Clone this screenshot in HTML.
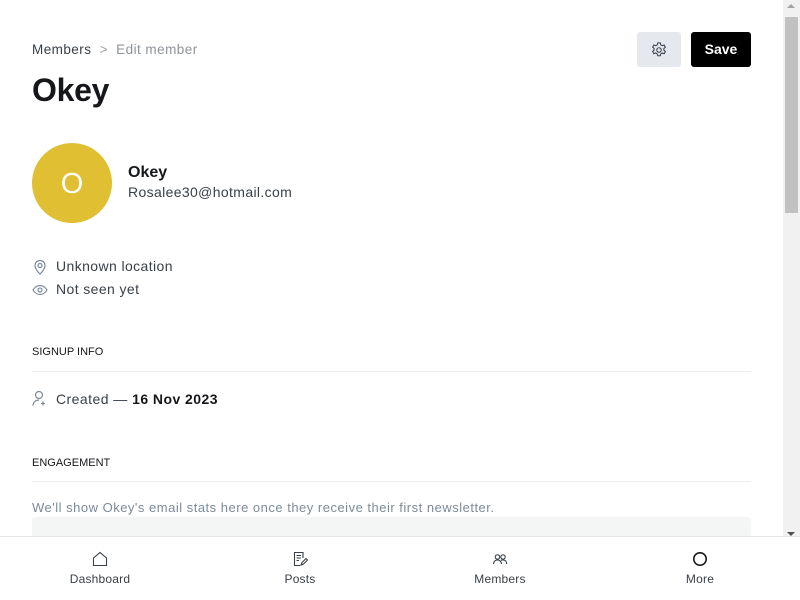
<!DOCTYPE html>
<html><head><meta charset="utf-8"><style>
*{box-sizing:border-box;margin:0;padding:0}
body{width:800px;height:600px;overflow:hidden;background:#fff;font-family:"Liberation Sans",Arial,sans-serif;color:#15171a;position:relative}
.a{position:absolute;white-space:nowrap}
.sb{position:absolute;left:783px;top:0;width:17px;height:536px;background:#f1f1f1}
.thumb{position:absolute;left:785px;top:17px;width:13px;height:196px;background:#c1c1c1}
.hr{position:absolute;left:32px;width:719px;height:1px;background:#ebeef0}
.nav{position:absolute;left:0;top:536px;width:800px;height:64px;background:#fff;border-top:1px solid #e3e5e8}
.ni{position:absolute;top:0;width:200px;text-align:center;font-size:12px;color:#394047;letter-spacing:0.2px}
</style></head><body>
<div class="sb"></div><div class="thumb"></div>
<div class="a" style="left:787px;top:4px;width:0;height:0;border-left:4px solid transparent;border-right:4px solid transparent;border-bottom:4px solid #a3a3a3"></div>
<div class="a" style="left:787px;top:532px;width:0;height:0;border-left:4px solid transparent;border-right:4px solid transparent;border-top:4px solid #505050"></div>

<div class="a" style="left:32px;top:42px;font-size:13.5px;color:#394047;letter-spacing:0.45px">Members <span style="color:#a0a6ad;margin:0 4px">&gt;</span> <span style="color:#8e9499">Edit member</span></div>
<div class="a" style="left:32px;top:72px;font-size:32px;font-weight:bold;letter-spacing:-0.3px">Okey</div>

<div class="a" style="left:637px;top:32px;width:44px;height:35px;background:#e5e9ed;border-radius:3px"></div>
<svg class="a" style="left:650px;top:41px" width="18" height="18" viewBox="0 0 24 24" fill="none" stroke="#394047" stroke-width="1.4"><circle cx="12" cy="12" r="3"/><path d="M10.3 2.5h3.4l.6 2.6 2 1.1 2.5-.9 1.7 2.9-2 1.8v2.2l2 1.8-1.7 2.9-2.5-.9-2 1.2-.6 2.5h-3.4l-.6-2.5-2-1.2-2.5.9-1.7-2.9 2-1.8v-2.2l-2-1.8 1.7-2.9 2.5.9 2-1.1z"/></svg>
<div class="a" style="left:691px;top:32px;width:60px;height:35px;background:#000;border-radius:3px;color:#fff;font-weight:bold;font-size:14px;text-align:center;line-height:35px">Save</div>

<div class="a" style="left:32px;top:143px;width:80px;height:80px;border-radius:50%;background:#e0bf33;color:#fff;font-size:29px;text-align:center;line-height:82px">O</div>
<div class="a" style="left:128px;top:164px;font-size:16px;font-weight:bold;color:#15171a">Okey</div>
<div class="a" style="left:128px;top:184px;font-size:14px;color:#394047;letter-spacing:0.36px">Rosalee30@hotmail.com</div>

<svg class="a" style="left:32px;top:259px" width="16" height="16" viewBox="0 0 16 16" fill="none" stroke="#7c8b9a" stroke-width="1.2"><path d="M8 15s5-4.5 5-8.5A5 5 0 0 0 3 6.5C3 10.5 8 15 8 15z"/><circle cx="8" cy="6.5" r="2"/></svg>
<div class="a" style="left:56px;top:258px;font-size:14px;color:#394047;letter-spacing:0.4px">Unknown location</div>
<svg class="a" style="left:32px;top:282px" width="16" height="16" viewBox="0 0 16 16" fill="none" stroke="#7c8b9a" stroke-width="1.2"><path d="M1 8s2.5-4.5 7-4.5S15 8 15 8s-2.5 4.5-7 4.5S1 8 1 8z"/><circle cx="8" cy="8" r="2"/></svg>
<div class="a" style="left:56px;top:281px;font-size:14px;color:#394047;letter-spacing:0.4px">Not seen yet</div>

<div class="a" style="left:32px;top:346px;font-size:11px;color:#15171a">SIGNUP INFO</div>
<div class="hr" style="top:371px"></div>
<svg class="a" style="left:32px;top:390px" width="16" height="17" viewBox="0 0 16 17" fill="none" stroke="#7c8b9a" stroke-width="1.2"><circle cx="7" cy="5" r="3.5"/><path d="M1 15.5c0-3 2.5-5.5 6-5.5M11 11.5v4M9 13.5h4"/></svg>
<div class="a" style="left:56px;top:391px;font-size:14px;color:#394047;letter-spacing:0.45px">Created — <b style="color:#15171a">16 Nov 2023</b></div>

<div class="a" style="left:32px;top:457px;font-size:11px;color:#15171a">ENGAGEMENT</div>
<div class="hr" style="top:481px"></div>
<div class="a" style="left:32px;top:500px;font-size:13px;color:#7c8b9a;letter-spacing:0.5px">We'll show Okey's email stats here once they receive their first newsletter.</div>
<div class="a" style="left:32px;top:517px;width:719px;height:20px;background:#f4f5f5;border-radius:3px"></div>

<div class="nav">
<div class="ni" style="left:0"><svg style="margin-top:14px" width="16" height="16" viewBox="0 0 16 16" fill="none" stroke="#394047" stroke-width="1.1"><path d="M1.5 7L8 1.5 14.5 7v7.5h-13z"/></svg><div style="margin-top:2px">Dashboard</div></div>
<div class="ni" style="left:200px"><svg style="margin-top:14px" width="16" height="16" viewBox="0 0 16 16" fill="none" stroke="#394047" stroke-width="1.1"><path d="M11 7V1.5H2.5v13H8M4.5 4.5h4.5M4.5 7h4.5M4.5 9.5h2.5M9 14l1-2.5 4-4 1.5 1.5-4 4z"/></svg><div style="margin-top:2px">Posts</div></div>
<div class="ni" style="left:400px"><svg style="margin-top:14px" width="16" height="16" viewBox="0 0 16 16" fill="none" stroke="#394047" stroke-width="1.1"><circle cx="5.5" cy="6" r="2.2"/><circle cx="11" cy="6" r="2.2"/><path d="M1.5 13c0-2.5 1.8-4 4-4s4 1.5 4 4M9 9.3c.6-.2 1.2-.3 2-.3 2.2 0 3.7 1.5 3.7 4"/></svg><div style="margin-top:2px">Members</div></div>
<div class="ni" style="left:600px"><svg style="margin-top:14px" width="16" height="16" viewBox="0 0 16 16" fill="none" stroke="#15171a" stroke-width="1.6"><circle cx="8" cy="8" r="6.2"/></svg><div style="margin-top:2px">More</div></div>
</div>
</body></html>
